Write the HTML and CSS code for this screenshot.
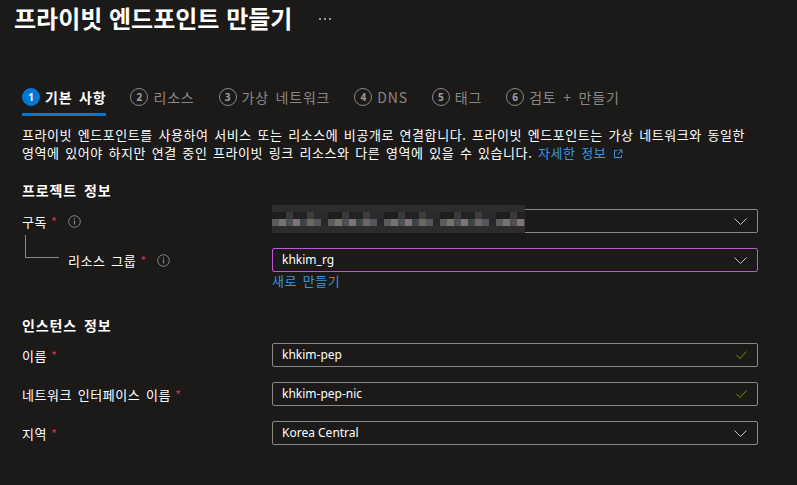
FILE: index.html
```html
<!DOCTYPE html>
<html lang="ko">
<head>
    <meta charset="UTF-8">
    <title>프라이빗 엔드포인트 만들기</title>
    <link rel="stylesheet" href="styles.css">
</head>
<body>
    <header class="page-header">
        <h1 class="page-title">프라이빗 엔드포인트 만들기</h1>
        <button class="more-btn" aria-label="더 보기">
            <svg width="14" height="4" viewBox="0 0 14 4"><circle cx="2" cy="2" r="1" fill="#c8c6c4"/><circle cx="7" cy="2" r="1" fill="#c8c6c4"/><circle cx="12" cy="2" r="1" fill="#c8c6c4"/></svg>
        </button>
    </header>

    <nav class="tabs">
        <div class="tab active"><span class="step">1</span>기본 사항</div>
        <div class="tab"><span class="step">2</span>리소스</div>
        <div class="tab"><span class="step">3</span>가상 네트워크</div>
        <div class="tab"><span class="step">4</span>DNS</div>
        <div class="tab"><span class="step">5</span>태그</div>
        <div class="tab"><span class="step">6</span>검토 + 만들기</div>
    </nav>

    <main class="content">
        <p class="desc">
            프라이빗 엔드포인트를 사용하여 서비스 또는 리소스에 비공개로 연결합니다. 프라이빗 엔드포인트는 가상 네트워크와 동일한<br>
            영역에 있어야 하지만 연결 중인 프라이빗 링크 리소스와 다른 영역에 있을 수 있습니다.
            <a class="link" href="#">자세한 정보
                <svg class="ext" width="10" height="10" viewBox="0 0 10 10"><path d="M4 1.5H1.5v7h7V6M5.5 1h3.5v3.5M9 1L4.5 5.5" fill="none" stroke="currentColor" stroke-width="1"/></svg>
            </a>
        </p>

        <h2 class="section-title">프로젝트 정보</h2>

        <div class="form-row">
            <div class="label">구독<span class="req">*</span>
                <svg class="info" width="13" height="13" viewBox="0 0 13 13"><circle cx="6.5" cy="6.5" r="5.8" fill="none" stroke="#8a8886" stroke-width="1"/><path d="M6.5 5.5v4" stroke="#8a8886" stroke-width="1.2"/><circle cx="6.5" cy="3.8" r="0.7" fill="#8a8886"/></svg>
            </div>
            <div class="field">
                <div class="mosaic"></div>
                <div class="input select"></div>
            </div>
        </div>

        <div class="form-row rg-row">
            <div class="label"><span class="tree"></span>리소스 그룹<span class="req">*</span>
                <svg class="info" width="13" height="13" viewBox="0 0 13 13"><circle cx="6.5" cy="6.5" r="5.8" fill="none" stroke="#8a8886" stroke-width="1"/><path d="M6.5 5.5v4" stroke="#8a8886" stroke-width="1.2"/><circle cx="6.5" cy="3.8" r="0.7" fill="#8a8886"/></svg>
            </div>
            <div class="field">
                <div class="input select focused">khkim_rg</div>
                <a class="link create" href="#">새로 만들기</a>
            </div>
        </div>

        <h2 class="section-title instance">인스턴스 정보</h2>

        <div class="form-row">
            <div class="label">이름<span class="req">*</span></div>
            <div class="field"><div class="input valid">khkim-pep</div></div>
        </div>

        <div class="form-row">
            <div class="label">네트워크 인터페이스 이름<span class="req">*</span></div>
            <div class="field"><div class="input valid">khkim-pep-nic</div></div>
        </div>

        <div class="form-row">
            <div class="label">지역<span class="req">*</span></div>
            <div class="field"><div class="input select">Korea Central</div></div>
        </div>
    </main>
</body>
</html>
```

FILE: styles.css
```css
body {
    margin: 0;
    background: #1b1a19;
    color: #ffffff;
    font-family: "Noto Sans", "Noto Sans CJK KR", sans-serif;
    font-size: 13px;
}

.page-header {
    display: flex;
    align-items: center;
    height: 36px;
    padding: 0 14px;
    gap: 26px;
}

.page-title {
    margin: 0;
    font-family: "Noto Sans CJK KR", sans-serif;
    font-size: 24px;
    font-weight: 700;
    line-height: 36px;
}

.more-btn {
    display: flex;
    align-items: center;
    padding: 0;
    margin-top: 2px;
    border: 0;
    background: none;
}

/* wizard tabs */
.tabs {
    display: flex;
    gap: 24px;
    margin: 45px 22px 0;
}

.tab {
    display: flex;
    align-items: center;
    gap: 5px;
    height: 32px;
    border-bottom: 3px solid transparent;
    font-family: "Noto Sans CJK KR", sans-serif;
    font-size: 14px;
    letter-spacing: 0.8px;
    word-spacing: 2px;
    color: #8a8886;
}

.step {
    display: flex;
    align-items: center;
    justify-content: center;
    box-sizing: border-box;
    width: 18px;
    height: 18px;
    border: 1px solid #8a8886;
    border-radius: 50%;
    font-family: "Noto Sans", sans-serif;
    font-size: 10px;
    font-weight: 700;
    letter-spacing: 0;
    color: #a19f9d;
}

.tab.active {
    border-bottom-color: #0078d4;
    color: #ffffff;
    font-weight: 700;
}

.tab.active .step {
    background: #0078d4;
    border-color: #0078d4;
    color: #ffffff;
}

/* form */
.content {
    padding: 0 22px;
}

.desc {
    margin: 10px 0 0;
    line-height: 18px;
    font-family: "Noto Sans CJK KR", sans-serif;
    letter-spacing: 0.55px;
    word-spacing: 1.5px;
}

.link {
    color: #3a96dd;
    text-decoration: none;
}

.ext {
    vertical-align: -1px;
    margin-left: 1px;
}

.section-title {
    margin: 18px 0 9px;
    font-family: "Noto Sans CJK KR", sans-serif;
    font-size: 14px;
    font-weight: 700;
    line-height: 20px;
    letter-spacing: 0.9px;
    word-spacing: 2px;
}

.section-title.instance {
    margin-top: 26px;
    margin-bottom: 8px;
}

.form-row {
    display: grid;
    grid-template-columns: 250px 486px;
    margin-bottom: 15px;
}

.label {
    display: flex;
    align-items: center;
    height: 24px;
    font-family: "Noto Sans CJK KR", sans-serif;
    letter-spacing: 0.55px;
    word-spacing: 1.5px;
}

.req {
    margin-left: 4px;
    color: #c4314b;
}

.info {
    margin-left: 10px;
}

.rg-row {
    margin-bottom: 0;
}

.tree {
    align-self: flex-start;
    box-sizing: border-box;
    width: 34px;
    height: 23px;
    margin: -13px 9px 0 3px;
    border-left: 1px solid #8a8886;
    border-bottom: 1px solid #8a8886;
}

.field {
    position: relative;
}

.input {
    box-sizing: border-box;
    height: 24px;
    padding: 0 30px 0 9px;
    border: 1px solid #8a8886;
    border-radius: 2px;
    font-size: 12px;
    line-height: 22px;
    background-repeat: no-repeat;
    background-position: right 10px center;
}

.select {
    background-image: url("data:image/svg+xml,%3Csvg xmlns='http://www.w3.org/2000/svg' width='13' height='7' viewBox='0 0 13 7'%3E%3Cpath d='M0.5 0.5l6 6 6-6' fill='none' stroke='%23c8c6c4' stroke-width='1'/%3E%3C/svg%3E");
}

.valid {
    background-image: url("data:image/svg+xml,%3Csvg xmlns='http://www.w3.org/2000/svg' width='11' height='8' viewBox='0 0 11 8'%3E%3Cpath d='M0.5 4l3.5 3.5 6.5-7' fill='none' stroke='%2357a300' stroke-width='1'/%3E%3C/svg%3E");
}

.focused {
    border-color: #c454dc;
}

.create {
    display: block;
    line-height: 17px;
    font-family: "Noto Sans CJK KR", sans-serif;
    letter-spacing: 0.55px;
    word-spacing: 1.5px;
}

/* blurred subscription name */
.mosaic {
    position: absolute;
    left: 0;
    top: -4px;
    width: 253px;
    height: 28px;
    z-index: 1;
    background:
        linear-gradient(#2e2d2c 0 7px, transparent 7px 21px, #2d2c2b 21px 28px),
        repeating-linear-gradient(90deg, #5a5a5a 0 7px, #76746f 7px 14px, #4e4f52 14px 21px, #7d7378 21px 28px, #3f4347 28px 35px, #6a6860 35px 42px, #555560 42px 49px, #2a2928 49px 56px) 0 14px / 100% 7px no-repeat,
        repeating-linear-gradient(90deg, #1f1e1d 0 14px, #3a3a3c 14px 21px, #232221 21px 35px, #403d40 35px 42px, #2b2a2a 42px 56px) 0 7px / 100% 7px no-repeat;
}
```
